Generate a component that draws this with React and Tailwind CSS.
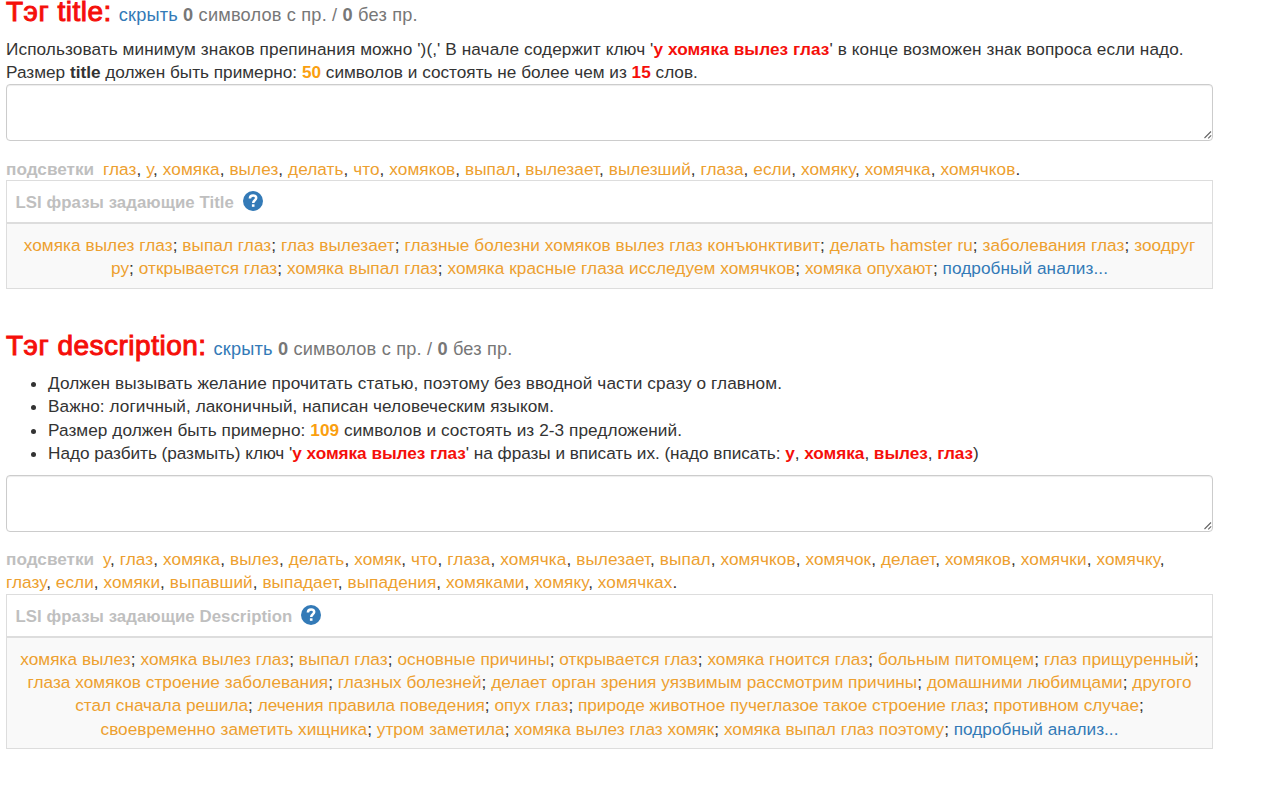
import React from "react";

const Key = ({ children }) => <b className="font-bold text-[#f50f0a]">{children}</b>;
const Num = ({ children }) => <b className="font-bold text-[#fa9f10]">{children}</b>;

function Terms({ items, sep, end, className = "" }) {
  return (
    <span className={className}>
      {items.map((t, i) => (
        <React.Fragment key={i}>
          <span className="text-[#eda02f]">{t}</span>
          {i < items.length - 1 ? sep + " " : end}
        </React.Fragment>
      ))}
    </span>
  );
}

function Heading({ title }) {
  return (
    <h3 className="flex h-[23px] items-baseline whitespace-nowrap text-[28px] leading-[23px]">
      <span className="tracking-[0.5px] text-[#f50f0a] [-webkit-text-stroke:1px_#f50f0a]">{title}</span>
      <span className="ml-[7px] text-[18.2px] tracking-[0.18px] text-[#777]">
        <a className="text-[#337ab7]">скрыть</a> <b>0</b> символов с пр. / <b>0</b> без пр.
      </span>
    </h3>
  );
}

function Box() {
  return (
    <div className="flex h-[57px] w-[1207px] items-end justify-end rounded-[4px] border border-[#ccc] bg-white shadow-[inset_0_1px_1px_rgba(0,0,0,0.075)]">
      <svg className="mb-px h-[8px] w-[8px]" viewBox="0 0 8 8" stroke="#666" strokeWidth="1.1" fill="none">
        <path d="M0.5 7L7 0.5M4.2 7.3L7.2 4.3" />
      </svg>
    </div>
  );
}

function Help() {
  return (
    <svg className="ml-[9px] h-[20px] w-[20px] -translate-y-[2px]" viewBox="0 0 20 20">
      <circle cx="10" cy="10" r="10" fill="#337ab7" />
      <path d="M6.9 7.6C6.9 5.4 8.2 4.5 10.1 4.5C12 4.5 13.2 5.5 13.2 7.1C13.2 9.3 10.2 9.3 10.2 12" fill="none" stroke="#fff" strokeWidth="2.5" />
      <rect x="8.9" y="13.3" width="2.6" height="2.5" fill="#fff" />
    </svg>
  );
}

function Panel({ title, children }) {
  return (
    <div className="w-[1207px] border border-[#ddd]">
      <div className="flex h-[43px] items-center border-b-2 border-[#ddd] pl-[8.5px] pt-[2px] text-[16.8px] font-bold tracking-[0.06px] text-[#bfbfbf]">
        <span>{title}</span>
        <Help />
      </div>
      <div className="flex flex-col items-center bg-[#f9f9f9] pb-[7.5px] pt-[9.5px]">{children}</div>
    </div>
  );
}

const More = () => <a className="text-[#337ab7]">подробный анализ...</a>;

export default function App() {
  return (
    <main className="h-[790px] w-[1280px] overflow-hidden bg-white pl-[6px] font-['Liberation_Sans',Arial,sans-serif] text-[17.2px] leading-[23.25px] text-[#333]">
      <section className="whitespace-nowrap">
        <Heading title="Тэг title:" />
        <p className="mt-[14.5px] tracking-[0.092px]">
          Использовать минимум знаков препинания можно ')(,' В начале содержит ключ '<Key>у хомяка вылез глаз</Key>' в конце возможен знак вопроса если надо.
        </p>
        <p className="tracking-[0.01px]">
          Размер <b>title</b> должен быть примерно: <Num>50</Num> символов и состоять не более чем из <Key>15</Key> слов.
        </p>
        <Box />
        <div className="mt-[16.5px] flex h-[22.5px] items-baseline">
          <b className="w-[97px] text-[17.2px] text-[#bfbfbf]">подсветки</b>
          <Terms className="tracking-[0.068px]" sep="," end="." items={["глаз", "у", "хомяка", "вылез", "делать", "что", "хомяков", "выпал", "вылезает", "вылезший", "глаза", "если", "хомяку", "хомячка", "хомячков"]} />
        </div>
        <Panel title="LSI фразы задающие Title">
          <Terms className="tracking-[0.065px]" sep=";" end="" items={["хомяка вылез глаз", "выпал глаз", "глаз вылезает", "глазные болезни хомяков вылез глаз конъюнктивит", "делать hamster ru", "заболевания глаз", "зоодруг"]} />
          <div className="tracking-[0.065px]">
            <Terms sep=";" end="; " items={["ру", "открывается глаз", "хомяка выпал глаз", "хомяка красные глаза исследуем хомячков", "хомяка опухают"]} />
            <More />
          </div>
        </Panel>
      </section>

      <section className="whitespace-nowrap">
        <div className="mt-[45px]">
          <Heading title="Тэг description:" />
        </div>
        <ul className="mt-[15.5px] list-disc pl-[42px]">
          <li className="tracking-[0.1px]">Должен вызывать желание прочитать статью, поэтому без вводной части сразу о главном.</li>
          <li className="tracking-[0.055px]">Важно: логичный, лаконичный, написан человеческим языком.</li>
          <li className="tracking-[0.07px]">Размер должен быть примерно: <Num>109</Num> символов и состоять из 2-3 предложений.</li>
          <li className="tracking-[-0.035px]">Надо разбить (размыть) ключ '<Key>у хомяка вылез глаз</Key>' на фразы и вписать их. (надо вписать: <Key>у</Key>, <Key>хомяка</Key>, <Key>вылез</Key>, <Key>глаз</Key>)</li>
        </ul>
        <div className="mt-[9.5px]"><Box /></div>
        <div className="mt-[16.5px] flex h-[23px] items-baseline">
          <b className="w-[97px] text-[17.2px] text-[#bfbfbf]">подсветки</b>
          <Terms className="tracking-[0.098px]" sep="," end="," items={["у", "глаз", "хомяка", "вылез", "делать", "хомяк", "что", "глаза", "хомячка", "вылезает", "выпал", "хомячков", "хомячок", "делает", "хомяков", "хомячки", "хомячку"]} />
        </div>
        <p className="tracking-[0.06px]">
          <Terms sep="," end="." items={["глазу", "если", "хомяки", "выпавший", "выпадает", "выпадения", "хомяками", "хомяку", "хомячках"]} />
        </p>
        <Panel title="LSI фразы задающие Description">
          <Terms className="tracking-[0.055px]" sep=";" end=";" items={["хомяка вылез", "хомяка вылез глаз", "выпал глаз", "основные причины", "открывается глаз", "хомяка гноится глаз", "больным питомцем", "глаз прищуренный"]} />
          <Terms className="tracking-[0.04px]" sep=";" end="" items={["глаза хомяков строение заболевания", "глазных болезней", "делает орган зрения уязвимым рассмотрим причины", "домашними любимцами", "другого"]} />
          <Terms className="tracking-[0px]" sep=";" end=";" items={["стал сначала решила", "лечения правила поведения", "опух глаз", "природе животное пучеглазое такое строение глаз", "противном случае"]} />
          <div className="tracking-[0.03px]">
            <Terms sep=";" end="; " items={["своевременно заметить хищника", "утром заметила", "хомяка вылез глаз хомяк", "хомяка выпал глаз поэтому"]} />
            <More />
          </div>
        </Panel>
      </section>
    </main>
  );
}
